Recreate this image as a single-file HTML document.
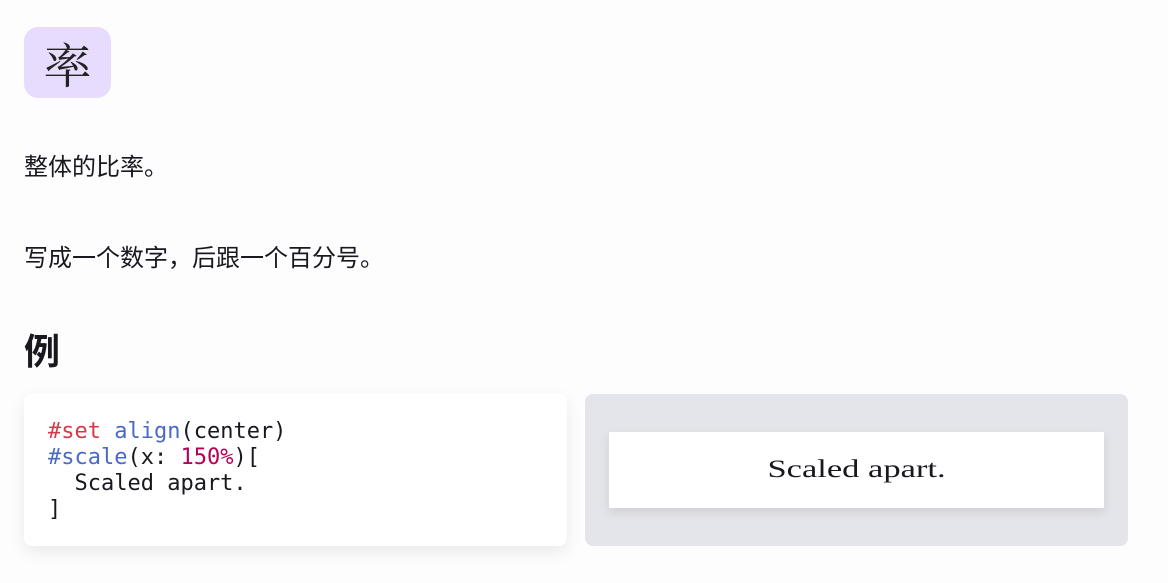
<!DOCTYPE html>
<html><head><meta charset="utf-8"><style>
body{margin:0;background:#fdfdfe;width:1168px;height:583px;overflow:hidden;font-family:"Liberation Sans","Noto Sans CJK SC",sans-serif;color:#19181f;}
.icon{position:absolute;left:24px;top:27px;width:87px;height:71px;background:#e8dcfe;border-radius:14px;font-family:"Noto Serif CJK SC",serif;font-size:48px;line-height:71px;text-align:center;color:#222;}
.p{position:absolute;left:24px;font-size:24px;line-height:26px;}
h2{position:absolute;left:24px;top:330px;margin:0;font-size:36px;line-height:44px;font-weight:bold;}
.code{position:absolute;left:24px;top:394px;width:543px;height:152px;background:#fff;border-radius:8px;box-shadow:0 6px 16px rgba(0,0,0,0.08);}
pre{margin:0;position:absolute;left:24px;top:25px;font-family:"DejaVu Sans Mono","Liberation Mono",monospace;font-size:22px;line-height:26px;color:#19181f;}
.r{color:#d73948}.b{color:#4b69c6}.m{color:#b60157}
.prev{position:absolute;left:585px;top:394px;width:543px;height:152px;background:#e4e5ea;border-radius:8px;}
.page{position:absolute;left:24px;top:38px;width:495px;height:76px;background:#fff;box-shadow:0 4px 10px rgba(0,0,0,0.1);text-align:center;font-family:"Liberation Serif",serif;font-size:25px;line-height:76px;}
</style></head><body>
<div class="icon">率</div>
<div class="p" style="top:155px">整体的比率。</div>
<div class="p" style="top:246px">写成一个数字，后跟一个百分号。</div>
<h2>例</h2>
<div class="code"><pre><span class="r">#set</span> <span class="b">align</span>(center)
<span class="b">#scale</span>(x: <span class="m">150%</span>)[
  Scaled apart.
]</pre></div>
<div class="prev"><div class="page"><span style="display:inline-block;transform:scaleX(1.38)">Scaled apart.</span></div></div>
</body></html>
